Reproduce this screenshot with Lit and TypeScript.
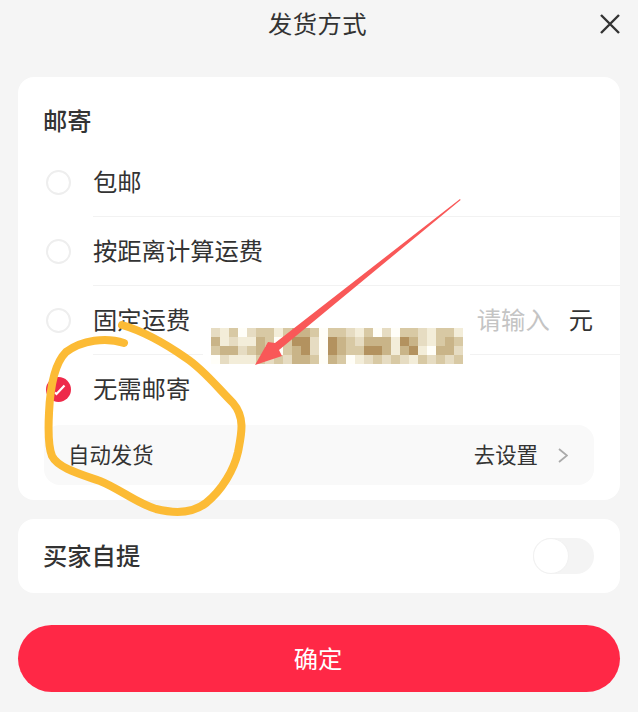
import { css, html, LitElement, TemplateResult } from "lit";
import { customElement } from "lit/decorators.js";

const PALETTE: Record<string, string> = {
    a: "#fffef8",
    b: "#f3edd9",
    c: "#e6dcc2",
    d: "#d8c9a4",
    e: "#c9b488",
    f: "#b3925f",
};

// pixelated block that hides a line of text in the reference
const MOSAIC = [
    "cbdacddbdeedaddcbdacaddcbddb",
    "ebcbbedadffcafedceeebfecbded",
    "deecdecadefcafeddffebefbaeec",
    "acbbbdcdceedaedabcdcdcbdcdcd",
];

const ROWS = ["包邮", "按距离计算运费", "固定运费", "无需邮寄"];

@customElement("app-root")
export class AppRoot extends LitElement {
    private renderRadio(checked: boolean): TemplateResult {
        if (!checked) return html`<span class="radio"></span>`;
        return html`
            <svg class="radio-on" viewBox="0 0 25 25">
                <circle cx="12.5" cy="12.5" r="12.5" fill="#ee2a4a"></circle>
                <path d="M9 15.5l1.5 1.5 8-8.5" fill="none" stroke="#fff" stroke-width="2.2"></path>
            </svg>
        `;
    }

    private renderRow(label: string, index: number): TemplateResult {
        const isFixed = index === 2;
        const isLast = index === ROWS.length - 1;
        return html`
            <div class="row">
                ${this.renderRadio(isLast)}
                <div class="row-body ${isLast ? "no-line" : ""}">
                    <span>${label}</span>
                    ${isFixed
                        ? html`<span class="price"><span class="placeholder">请输入</span><span>元</span></span>`
                        : ""}
                </div>
            </div>
        `;
    }

    protected render(): TemplateResult {
        return html`
            <header class="header">
                <span></span>
                <span class="title">发货方式</span>
                <svg class="close" viewBox="0 0 20 20">
                    <path d="M1 1l18 18M19 1L1 19" fill="none" stroke="#333" stroke-width="2.4"></path>
                </svg>
            </header>

            <section class="card mail">
                <div class="card-title">邮寄</div>
                ${ROWS.map((label, i) => this.renderRow(label, i))}
                <div class="auto">
                    <span>自动发货</span>
                    <span class="auto-link">
                        去设置
                        <svg class="chevron" viewBox="0 0 10 15">
                            <path d="M1 1l8 6.5-8 6.5" fill="none" stroke="#aaa" stroke-width="1.8"></path>
                        </svg>
                    </span>
                </div>
            </section>

            <section class="card pickup">
                <span class="card-title">买家自提</span>
                <span class="toggle"><span class="knob"></span></span>
            </section>

            <button class="confirm">确定</button>

            <div class="mosaic">
                ${MOSAIC.join("").split("").map(
                    (c) => html`<i style="background:${PALETTE[c]}"></i>`
                )}
            </div>

            <svg class="marks" viewBox="0 0 638 712">
                <path
                    d="M124 343C106 337 82 340 66 352C54 364 50 390 49 413C48 432 48 446 52 456C58 468 80 474 100 481C120 489 136 503 156 509C172 513 192 514 206 503C222 490 234 470 238 452C241 436 246 418 233 403C216 386 204 370 186 358C166 344 146 332 122 325"
                    fill="none"
                    stroke="#fcbb35"
                    stroke-width="8"
                    stroke-linecap="round"
                ></path>
                <path
                    d="M460 199L460.6 200L279 350L282 356L255 365L268 342L275 343Z"
                    fill="#f95858"
                ></path>
            </svg>
        `;
    }

    static styles = css`
        :host {
            background: #f5f5f5;
            color: #333;
            display: block;
            font-family: "Noto Sans CJK SC", "Noto Sans", sans-serif;
            font-size: 24.3px;
            height: 712px;
            overflow: hidden;
            position: relative;
            width: 638px;
        }
        .header {
            align-items: center;
            box-sizing: border-box;
            display: grid;
            grid-template-columns: 1fr auto 1fr;
            height: 48px;
            margin-bottom: 29px;
            padding: 0 18px 0 15px;
        }
        .title {
            letter-spacing: 0.4px;
            line-height: 36px;
            padding-bottom: 2px;
        }
        .close {
            height: 20px;
            justify-self: end;
            width: 20px;
        }
        .card {
            background: #fff;
            border-radius: 16px;
            margin: 0 18px;
        }
        .mail {
            height: 423px;
            margin-bottom: 19px;
        }
        .card-title {
            font-weight: 500;
            line-height: 36px;
        }
        .mail .card-title {
            padding: 25px 0 10px 25px;
        }
        .row {
            align-items: center;
            display: flex;
            padding-left: 28px;
        }
        .radio,
        .radio-on {
            box-sizing: border-box;
            flex: none;
            height: 25px;
            margin-right: 22px;
            width: 25px;
        }
        .radio {
            border: 2px solid #eeeeee;
            border-radius: 50%;
        }
        .row-body {
            align-items: center;
            border-bottom: 1px solid #f2f2f2;
            box-sizing: border-box;
            display: flex;
            flex: 1;
            height: 69px;
            justify-content: space-between;
            padding: 0 27px 3px 0;
        }
        .row-body.no-line {
            border-bottom: 1px solid transparent;
        }
        .price {
            display: flex;
            gap: 19px;
        }
        .placeholder {
            color: #c4c4c4;
        }
        .auto {
            align-items: center;
            background: #f9f9f9;
            border-radius: 16px;
            box-sizing: border-box;
            display: flex;
            font-size: 21.4px;
            height: 60px;
            justify-content: space-between;
            margin: 1px 26px 0;
            padding: 0 26px 3px 24px;
        }
        .auto-link {
            align-items: center;
            display: flex;
            gap: 20px;
        }
        .chevron {
            height: 15px;
            margin-top: 3px;
            width: 10px;
        }
        .pickup {
            align-items: center;
            display: flex;
            height: 74px;
            justify-content: space-between;
            margin-bottom: 32px;
            padding: 0 26px 0 25px;
        }
        .pickup .card-title {
            padding-bottom: 2px;
        }
        .toggle {
            background: #f4f4f4;
            border-radius: 18px;
            display: block;
            height: 36px;
            width: 61px;
        }
        .knob {
            background: #fff;
            border: 1px solid #f1f1f1;
            border-radius: 50%;
            box-sizing: border-box;
            display: block;
            height: 36px;
            width: 36px;
        }
        .confirm {
            background: #ff2846;
            border: none;
            border-radius: 34px;
            color: #fff;
            display: block;
            font: inherit;
            height: 67px;
            margin: 0 18px;
            padding: 0 2px 2px 0;
            width: 602px;
        }
        /* annotations drawn over the screenshot */
        .mosaic {
            background: #fff;
            display: grid;
            filter: blur(0.4px);
            grid-template-columns: repeat(28, 9px);
            grid-auto-rows: 9px;
            left: 203px;
            padding: 3px 7px 7px 8px;
            position: absolute;
            top: 325px;
        }
        .marks {
            height: 712px;
            left: 0;
            pointer-events: none;
            position: absolute;
            top: 0;
            width: 638px;
        }
    `;
}
